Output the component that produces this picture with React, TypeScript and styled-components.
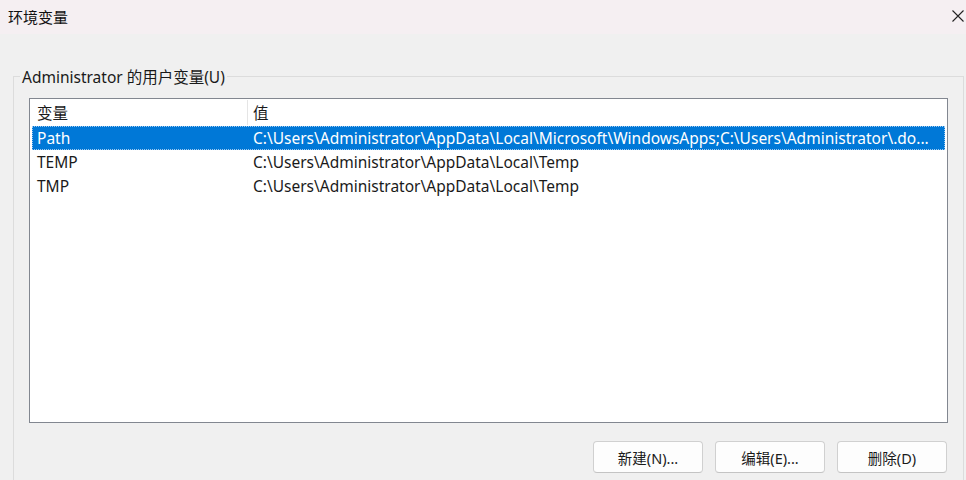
import { createGlobalStyle } from 'styled-components';
import styled from 'styled-components';

const GlobalStyle = createGlobalStyle`
  html, body {
    margin: 0;
    padding: 0;
    background: #f0f0f0;
  }
  body {
    font-family: "Noto Sans", "Noto Sans CJK SC", sans-serif;
    font-size: 15.5px;
    color: #1a1a1a;
  }
`;

const Window = styled.div`
  width: 966px;
  height: 480px;
  overflow: hidden;
  background: #f0f0f0;
  display: flex;
  flex-direction: column;
`;

const TitleBar = styled.div`
  height: 34px;
  flex-shrink: 0;
  display: flex;
  align-items: center;
  justify-content: space-between;
  padding: 0 1px 0 8px;
  background: #f5eff2;
`;

const Title = styled.span`
  font-size: 15px;
  color: #111;
  margin-top: -2px;
`;

const CloseButton = styled.button`
  width: 14px;
  height: 14px;
  border: 0;
  padding: 0;
  background: transparent;
  display: flex;
  align-items: center;
  justify-content: center;
  margin-top: -2px;
`;

const Body = styled.div`
  flex: 1;
  padding: 31px 3px 0 13px;
`;

const Group = styled.fieldset`
  margin: 0;
  padding: 10px 15px 0 15px;
  border: 1px solid #dcdcdc;
  border-bottom: 0;
  height: 430px;
  box-sizing: border-box;
`;

const Legend = styled.legend`
  padding: 0 2px;
  margin-left: -9px;
  color: #1a1a1a;
`;

const ListBox = styled.div`
  width: 919px;
  height: 325px;
  box-sizing: border-box;
  border: 1px solid #828790;
  background: #fff;
  display: flex;
  flex-direction: column;
  padding: 1px 2px 0 2px;
`;

const Row = styled.div<{ $selected?: boolean }>`
  display: grid;
  grid-template-columns: 216px 1fr;
  height: 24px;
  align-items: center;
  background: ${p => (p.$selected ? '#0078d7' : 'transparent')};
  color: ${p => (p.$selected ? '#fff' : '#1a1a1a')};
  outline: ${p => (p.$selected ? '1px dotted #9ec9f0' : 'none')};
  outline-offset: -1px;
  white-space: nowrap;
`;

const HeaderRow = styled(Row)`
  height: 25px;
  margin-bottom: 1px;
`;

const Cell = styled.span`
  padding-left: 5px;
  overflow: hidden;
`;

const HeaderCell = styled(Cell)<{ $divider?: boolean }>`
  height: 100%;
  display: flex;
  align-items: center;
  box-sizing: border-box;
  border-right: ${p => (p.$divider ? '1px solid #e5e5e5' : '0')};
`;

const ButtonBar = styled.div`
  display: flex;
  justify-content: flex-end;
  gap: 12px;
  padding: 18px 1px 0 0;
`;

const Button = styled.button`
  width: 110px;
  height: 32px;
  box-sizing: border-box;
  border: 1px solid #d0d0d0;
  border-bottom-color: #c4c4c4;
  border-radius: 4px;
  background: #fdfdfd;
  font-family: "Noto Sans", "Noto Sans CJK SC", sans-serif;
  font-size: 14.5px;
  color: #1a1a1a;
  padding: 0;
`;

// values as the list control shows them (long ones already clipped with "...")
const vars = [
  {
    name: 'Path',
    value: 'C:\\Users\\Administrator\\AppData\\Local\\Microsoft\\WindowsApps;C:\\Users\\Administrator\\.do...',
  },
  { name: 'TEMP', value: 'C:\\Users\\Administrator\\AppData\\Local\\Temp' },
  { name: 'TMP', value: 'C:\\Users\\Administrator\\AppData\\Local\\Temp' },
];

const App = () => {
  return (
    <Window>
      <GlobalStyle />
      <TitleBar>
        <Title>环境变量</Title>
        <CloseButton aria-label="关闭">
          <svg width="12" height="12" viewBox="0 0 12 12">
            <path d="M0.5 0.5L11.5 11.5M11.5 0.5L0.5 11.5" stroke="#222" strokeWidth="1.1" />
          </svg>
        </CloseButton>
      </TitleBar>
      <Body>
        <Group>
          <Legend>Administrator 的用户变量(U)</Legend>
          <ListBox>
            <HeaderRow>
              <HeaderCell $divider>变量</HeaderCell>
              <HeaderCell>值</HeaderCell>
            </HeaderRow>
            {vars.map((v, i) => (
              <Row key={v.name} $selected={i === 0}>
                <Cell>{v.name}</Cell>
                <Cell>{v.value}</Cell>
              </Row>
            ))}
          </ListBox>
          <ButtonBar>
            <Button>新建(N)...</Button>
            <Button>编辑(E)...</Button>
            <Button>删除(D)</Button>
          </ButtonBar>
        </Group>
      </Body>
    </Window>
  );
};

export default App;
